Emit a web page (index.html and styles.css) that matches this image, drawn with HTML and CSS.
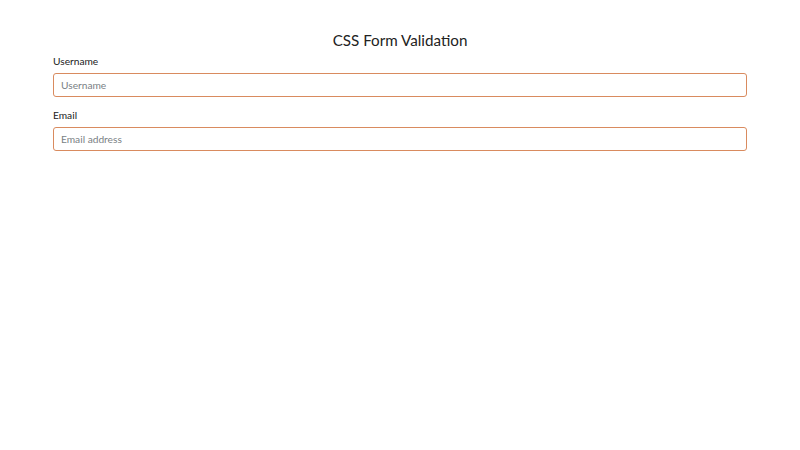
FILE: index.html
```html
<!DOCTYPE html>
<html>
<head>
<meta charset="utf-8">
<link rel="stylesheet" href="styles.css">
</head>
<body>
<form class="form">
  <h1 class="title">CSS Form Validation</h1>
  <div class="field">
    <label class="label" for="u">Username</label>
    <input class="input" id="u" type="text" placeholder="Username">
  </div>
  <div class="field">
    <label class="label" for="e">Email</label>
    <input class="input" id="e" type="email" placeholder="Email address">
  </div>
</form>
</body>
</html>
```
FILE: styles.css
```css
html, body {
  margin: 0;
  padding: 0;
  background: #fff;
}
body {
  font-family: "Lato", "Open Sans", sans-serif;
  color: #212529;
}
.form {
  width: 694px;
  margin: 0 auto;
  padding-top: 30px;
  display: flex;
  flex-direction: column;
}
.title {
  margin: 0 0 4px;
  font-size: 15.2px;
  font-weight: 400;
  text-align: center;
  line-height: 20px;
  color: #222;
}
.field {
  display: flex;
  flex-direction: column;
  margin-bottom: 11px;
}
.label {
  font-size: 10.2px;
  line-height: 14px;
  margin-bottom: 5px;
  color: #222;
}
.input {
  box-sizing: border-box;
  height: 24px;
  border: 1px solid #d98b5f;
  border-radius: 3px;
  padding: 0 7px;
  font-family: inherit;
  font-size: 10.2px;
  color: #495057;
  outline: none;
}
.input::placeholder {
  color: #7a7f85;
}
```
